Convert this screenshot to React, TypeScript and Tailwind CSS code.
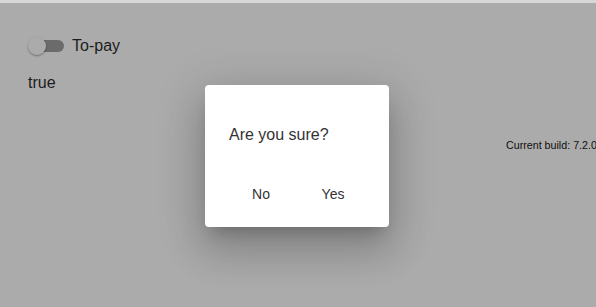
export default function App() {
  return (
    <div className="relative w-[596px] h-[307px] overflow-hidden bg-[#ababab] font-['Liberation_Sans',Arial,sans-serif]">
      {/* Top strip */}
      <div className="h-[3px] bg-[#d7d7d7]" />

      {/* Page content (under backdrop) */}
      <div className="px-[28px] pt-[31px]">
        <div className="flex items-center gap-[8px]">
          <div className="relative w-[36px] h-[20px] flex items-center">
            <div className="ml-[10px] w-[26px] h-[12px] rounded-full bg-[#6b6b6b]" />
            <div className="absolute left-0 top-[1px] w-[18px] h-[18px] rounded-full bg-[#ababab] shadow-[0_1px_2px_rgba(0,0,0,0.35)]" />
          </div>
          <span className="text-[16px] text-[#1c1c1c]">To-pay</span>
        </div>
        <div className="mt-[13px] text-[16px] text-[#1c1c1c]">true</div>
      </div>

      <div className="absolute left-[506px] top-[137px] whitespace-nowrap text-[10.7px] text-[#0f0f0f]">Current build: 7.2.0</div>

      {/* Dialog */}
      <div className="absolute left-[205px] top-[85px] w-[184px] h-[142px] bg-white rounded-[4px] shadow-[0_11px_15px_-7px_rgba(0,0,0,0.2),0_24px_38px_3px_rgba(0,0,0,0.14),0_9px_46px_8px_rgba(0,0,0,0.12)] flex flex-col">
        <div className="px-[24px] pt-[38px] text-[16px] text-[#333333]">Are you sure?</div>
        <div className="flex gap-[8px] px-[24px] mt-[29px]">
          <button className="w-[64px] h-[36px] text-[14px] text-[#333333]">No</button>
          <button className="w-[64px] h-[36px] text-[14px] text-[#333333]">Yes</button>
        </div>
      </div>
    </div>
  );
}
